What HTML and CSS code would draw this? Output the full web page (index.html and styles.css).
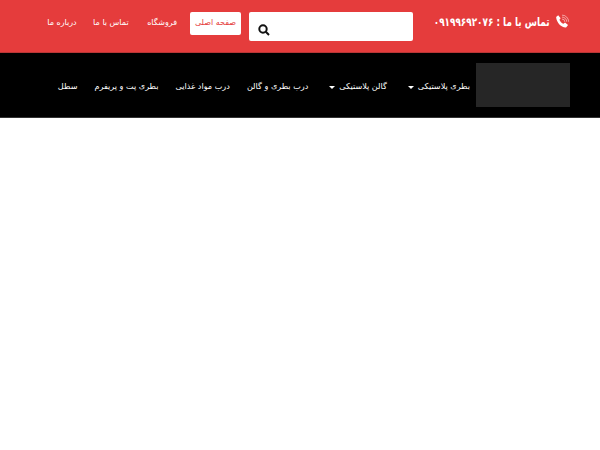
FILE: index.html
```html
<!DOCTYPE html>
<html lang="fa" dir="rtl">
<head>
<meta charset="utf-8">
<title>بطری پلاستیکی</title>
<link rel="stylesheet" href="styles.css">
</head>
<body>
<header class="top">
  <div class="phone">
    <svg class="phone-icon" viewBox="0 0 16 16" width="15" height="15" aria-hidden="true">
      <path class="handset" d="M1.200 3.200 3.400 1.200 6 4.400 4.700 6c.8 1.900 2.400 3.600 4.400 4.500L10.700 9.100l3.200 2.700-2.100 2.500C6.500 14.600 1.500 9 1.200 3.200Z"/>
      <path class="waves" d="M7.500 1.200a7 7 0 0 1 7 7M7.500 3.300a5 5 0 0 1 5 5M7.500 5.400a3 3 0 0 1 3 3"/>
    </svg>
    <span class="phone-text">تماس با ما : ۰۹۱۹۹۶۹۲۰۷۶</span>
  </div>
  <form class="search">
    <svg class="search-icon" viewBox="0 0 12 12" width="12" height="12" aria-hidden="true">
      <circle cx="5" cy="5" r="3.700"/>
      <path d="M7.800 7.800 11 11"/>
    </svg>
  </form>
  <nav class="top-nav">
    <a class="top-link active" href="#">صفحه اصلی</a>
    <a class="top-link" href="#">فروشگاه</a>
    <a class="top-link" href="#">تماس با ما</a>
    <a class="top-link last" href="#">درباره ما</a>
  </nav>
</header>
<div class="bar">
  <div class="logo"></div>
  <nav class="main-nav">
    <a class="main-link" href="#">بطری پلاستیکی<i class="caret"></i></a>
    <a class="main-link" href="#">گالن پلاستیکی<i class="caret"></i></a>
    <a class="main-link" href="#">درب بطری و گالن</a>
    <a class="main-link" href="#">درب مواد غذایی</a>
    <a class="main-link" href="#">بطری پت و پریفرم</a>
    <a class="main-link" href="#">سطل</a>
  </nav>
</div>
</body>
</html>
```
FILE: styles.css
```css
* { box-sizing: border-box; }
html, body { margin: 0; padding: 0; }
body {
  background: #fff;
  font-family: "DejaVu Sans", "Noto Sans", sans-serif;
  height: 450px;
  overflow: hidden;
}
a { text-decoration: none; }
.top {
  height: 53px;
  background: #e53c3c;
  border-bottom: 1px solid #b93636;
  display: flex;
  align-items: flex-start;
  padding: 12px 30px 0 0;
}
.phone {
  width: 136px;
  height: 20px;
  flex: none;
  display: flex;
  align-items: center;
  gap: 5px;
  color: #fff;
  font-weight: 700;
  font-size: 12px;
  white-space: nowrap;
}
.phone-icon { flex: none; margin-top: -2px; }
.phone-text {
  display: inline-block;
  transform: scaleX(.74);
  transform-origin: right center;
}
.handset { fill: #fff; }
.waves { fill: none; stroke: #fff; stroke-width: .7; opacity: .8; }
.search {
  width: 164px;
  height: 29px;
  flex: none;
  margin-right: 21px;
  background: #fff;
  border-radius: 2px;
  display: flex;
  align-items: center;
  justify-content: flex-end;
  padding: 7px 9px 0;
}
.search-icon { fill: none; stroke: #111; stroke-width: 2; }
.top-nav {
  display: flex;
  align-items: center;
  height: 23px;
  margin-right: 8px;
  gap: 18.500px;
}
.top-link {
  color: #fff;
  font-size: 8px;
  height: 23px;
  line-height: 21px;
  white-space: nowrap;
}
.last { margin-right: -2px; }
.active {
  background: #fff;
  color: #e53c3c;
  border-radius: 2px;
  width: 51px;
  margin-left: -5.500px;
  text-align: center;
}
.bar {
  height: 65px;
  background: #000;
  border-bottom: 1px solid #333;
  display: flex;
  align-items: center;
  padding-right: 30px;
}
.logo {
  width: 94px;
  height: 44px;
  margin-top: -1px;
  background: #262626;
}
.main-nav {
  display: flex;
  align-items: center;
  margin-right: 6px;
  gap: 17px;
}
.main-link {
  color: #fff;
  font-size: 8.100px;
  padding-top: 2px;
  white-space: nowrap;
  display: flex;
  align-items: center;
  gap: 4px;
}
.caret {
  width: 0;
  height: 0;
  border-style: solid;
  border-width: 3px 3px 0;
  border-color: #fff transparent transparent;
  margin-top: 2px;
  margin-left: 4px;
}
```
